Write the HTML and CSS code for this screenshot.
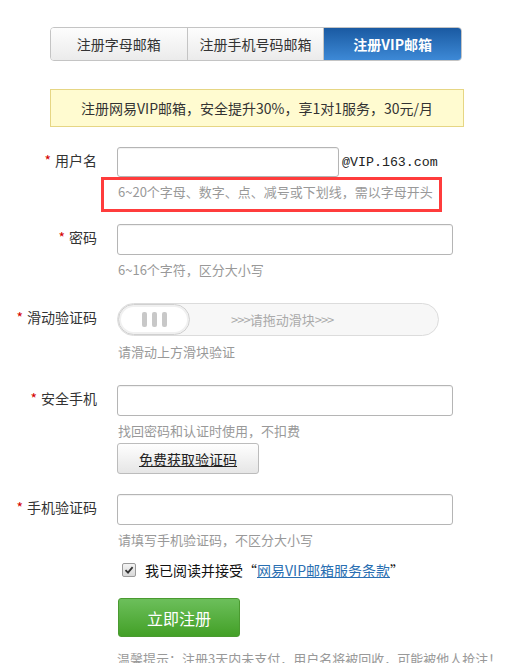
FILE: index.html
```html
<!DOCTYPE html>
<html lang="zh-CN">
<head>
    <meta charset="UTF-8">
    <meta name="viewport" content="width=device-width, initial-scale=1.0">
    <title>注册VIP邮箱</title>
    <link rel="stylesheet" href="styles.css">
</head>
<body>
    <div class="register-container">
        <div class="tabs">
            <a class="tab">注册字母邮箱</a>
            <a class="tab">注册手机号码邮箱</a>
            <a class="tab tab-active">注册VIP邮箱</a>
        </div>

        <div class="notice">注册网易VIP邮箱，安全提升30%，享1对1服务，30元/月</div>

        <div class="form-row row-user">
            <label class="form-label"><span class="star">*</span>用户名</label>
            <div class="form-field">
                <div class="user-line">
                    <input type="text" class="text-input user-input">
                    <span class="domain">@VIP.163.com</span>
                </div>
                <p class="hint">6~20个字母、数字、点、减号或下划线，需以字母开头</p>
                <div class="mark-box"></div>
            </div>
        </div>

        <div class="form-row row-pass">
            <label class="form-label"><span class="star">*</span>密码</label>
            <div class="form-field">
                <input type="password" class="text-input">
                <p class="hint">6~16个字符，区分大小写</p>
            </div>
        </div>

        <div class="form-row row-slide">
            <label class="form-label"><span class="star">*</span>滑动验证码</label>
            <div class="form-field">
                <div class="slider">
                    <div class="slider-handle">
                        <i></i><i></i><i></i>
                    </div>
                    <span class="slider-text"><span class="arrows">&gt;&gt;&gt;</span>请拖动滑块<span class="arrows">&gt;&gt;&gt;</span></span>
                </div>
                <p class="hint hint-slide">请滑动上方滑块验证</p>
            </div>
        </div>

        <div class="form-row row-phone">
            <label class="form-label"><span class="star">*</span>安全手机</label>
            <div class="form-field">
                <input type="text" class="text-input">
                <p class="hint">找回密码和认证时使用，不扣费</p>
                <button class="code-button">免费获取验证码</button>
            </div>
        </div>

        <div class="form-row row-code">
            <label class="form-label"><span class="star">*</span>手机验证码</label>
            <div class="form-field">
                <input type="text" class="text-input">
                <p class="hint">请填写手机验证码，不区分大小写</p>
                <div class="agree">
                    <span class="check-box">
                        <svg width="10" height="10" viewBox="0 0 10 10"><path d="M1.5 5.2 L4 7.6 L8.6 2.2" fill="none" stroke="#333" stroke-width="1.8"/></svg>
                    </span>
                    <span>我已阅读并接受“<a class="terms" href="#">网易VIP邮箱服务条款</a>”</span>
                </div>
                <button class="submit-button">立即注册</button>
                <p class="tip">温馨提示：注册3天内未支付，用户名将被回收，可能被他人抢注！</p>
            </div>
        </div>
    </div>
</body>
</html>
```

FILE: styles.css
```css
body {
    font-family: "Noto Sans CJK SC", "Liberation Sans", sans-serif;
    font-size: 14px;
    color: #333;
    background-color: #fff;
    margin: 0;
    padding: 0;
}
.register-container {
    width: 509px;
    height: 663px;
    overflow: hidden;
    padding-top: 27px;
    box-sizing: border-box;
}
.tabs {
    display: flex;
    width: 412px;
    height: 34px;
    margin-left: 50px;
    border: 1px solid #c4c4c4;
    border-radius: 4px;
    box-sizing: border-box;
    overflow: hidden;
}
.tab {
    width: 137px;
    line-height: 32px;
    text-align: center;
    color: #333;
    font-size: 14px;
    background: linear-gradient(#fdfdfd, #ebebeb);
    border-right: 1px solid #c4c4c4;
    cursor: pointer;
}
.tab-active {
    width: 138px;
    border-right: none;
    color: #fff;
    font-weight: bold;
    background: linear-gradient(#1a5aa2, #3d89d6);
}
.notice {
    width: 414px;
    height: 38px;
    margin: 28px 0 0 50px;
    box-sizing: border-box;
    background-color: #fffbd0;
    border: 1px solid #e6d684;
    line-height: 36px;
    text-align: center;
    font-size: 14px;
    color: #333;
}
.form-row {
    display: flex;
}
.form-label {
    width: 97px;
    flex-shrink: 0;
    text-align: right;
    margin-right: 20px;
    line-height: 26px;
    font-size: 14px;
    color: #333;
}
.star {
    color: #d40000;
    margin-right: 4px;
}
.form-field {
    position: relative;
    width: 336px;
}
.text-input {
    display: block;
    width: 336px;
    height: 31px;
    margin: 0;
    border: 1px solid #b5b5b5;
    border-radius: 3px;
    box-sizing: border-box;
    box-shadow: inset 0 1px 1px rgba(0, 0, 0, 0.06);
}
.user-line {
    display: flex;
    align-items: center;
}
.user-input {
    width: 222px;
    height: 30px;
}
.domain {
    font-family: "Liberation Mono", monospace;
    font-size: 13.3px;
    color: #222;
    margin-left: 3px;
}
.hint {
    margin: 7px 0 0 1px;
    font-size: 13px;
    line-height: 16px;
    color: #999;
}
.hint-slide {
    margin-top: 8px;
}
.mark-box {
    position: absolute;
    left: -16px;
    top: 30px;
    width: 341px;
    height: 35px;
    border: 3px solid #ff3c3c;
    box-sizing: border-box;
}
.row-user {
    margin-top: 20px;
}
.row-pass {
    margin-top: 24px;
}
.row-slide {
    margin-top: 25px;
}
.row-slide .form-label {
    line-height: 29px;
}
.row-phone {
    margin-top: 25px;
}
.row-code {
    margin-top: 20px;
}
.slider {
    position: relative;
    width: 322px;
    height: 33px;
    border: 1px solid #dcdcdc;
    border-radius: 17px;
    background-color: #f7f7f7;
    box-sizing: border-box;
    display: flex;
    align-items: center;
}
.slider-handle {
    width: 72px;
    height: 31px;
    border: 1px solid #d0d0d0;
    border-radius: 16px;
    background-color: #fff;
    box-shadow: inset 0 0 0 2px #f0f0f0;
    box-sizing: border-box;
    display: flex;
    justify-content: center;
    align-items: center;
    gap: 5px;
}
.slider-handle i {
    width: 5px;
    height: 15px;
    border-radius: 2px;
    background-color: #c8c8c8;
}
.slider-text {
    margin-left: 41px;
    font-size: 13px;
    color: #aaa;
}
.arrows {
    letter-spacing: -1px;
}
.code-button {
    display: block;
    width: 142px;
    height: 31px;
    margin-top: 4px;
    border: 1px solid #bcbcbc;
    border-radius: 3px;
    background: linear-gradient(#fefefe, #e6e6e6);
    font-family: inherit;
    font-size: 14px;
    color: #222;
    text-decoration: underline;
    cursor: pointer;
}
.agree {
    display: flex;
    align-items: center;
    margin-top: 13px;
    margin-left: 5px;
    font-size: 14px;
    line-height: 18px;
    color: #111;
}
.check-box {
    display: flex;
    align-items: center;
    justify-content: center;
    width: 12px;
    height: 12px;
    margin-right: 9px;
    border: 1px solid #9a9a9a;
    border-radius: 2px;
    background: linear-gradient(#f4f4f4, #d8d8d8);
}
.terms {
    color: #2a6fb2;
    text-decoration: underline;
}
.submit-button {
    display: block;
    width: 122px;
    height: 39px;
    margin-top: 19px;
    margin-left: 1px;
    border: 1px solid #4a9a30;
    border-radius: 3px;
    background: linear-gradient(#6cbf5b, #43a027);
    color: #fff;
    font-family: inherit;
    font-size: 16px;
    cursor: pointer;
}
.tip {
    margin: 13px 0 0 0;
    font-size: 13px;
    line-height: 18px;
    color: #999;
    white-space: nowrap;
}
```
